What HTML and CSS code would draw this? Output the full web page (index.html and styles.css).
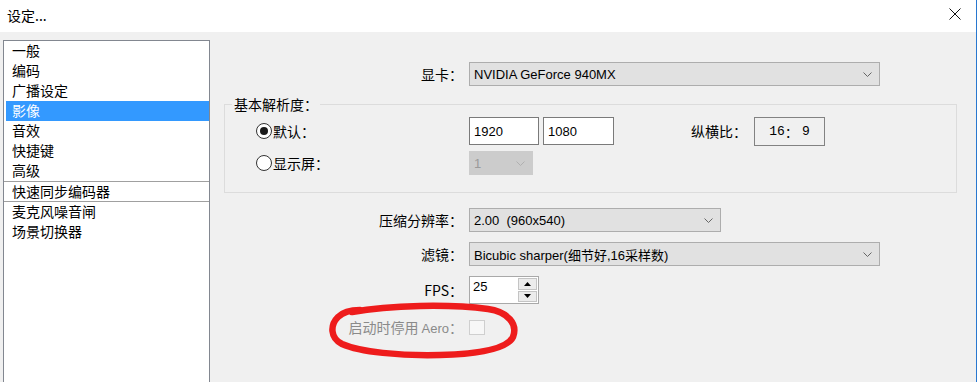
FILE: index.html
```html
<!DOCTYPE html>
<html lang="zh-CN">
<head>
    <meta charset="UTF-8">
    <title>设定...</title>
    <link rel="stylesheet" href="styles.css">
</head>
<body>
    <div class="window">
        <div class="titlebar">
            <span class="title">设定...</span>
            <span class="close">
                <svg width="12" height="12" viewBox="0 0 12 12"><path d="M0.5 0.5 L11.5 11.5 M11.5 0.5 L0.5 11.5" stroke="#111" stroke-width="1"/></svg>
            </span>
        </div>
        <div class="main">
            <ul class="nav">
                <li>一般</li>
                <li>编码</li>
                <li>广播设定</li>
                <li class="active">影像</li>
                <li>音效</li>
                <li>快捷键</li>
                <li>高级</li>
                <li class="split">快速同步编码器</li>
                <li>麦克风噪音闸</li>
                <li>场景切换器</li>
            </ul>
            <div class="panel">
                <div class="row row-gpu">
                    <span class="lbl">显卡：</span>
                    <div class="select select-wide">
                        <span>NVIDIA GeForce 940MX</span>
                        <svg class="chev" width="9" height="5" viewBox="0 0 9 5"><path d="M0.5 0.5 L4.5 4.5 L8.5 0.5" fill="none" stroke="#666"/></svg>
                    </div>
                </div>

                <fieldset class="group">
                    <legend>基本解析度：</legend>
                    <div class="grow">
                        <span class="radio checked"></span>
                        <span class="rlbl">默认：</span>
                        <span class="field field-w">1920</span>
                        <span class="field field-h">1080</span>
                        <span class="ratio-lbl">纵横比：</span>
                        <span class="ratio">16<span class="colon">：</span>9</span>
                    </div>
                    <div class="grow grow-2">
                        <span class="radio"></span>
                        <span class="rlbl">显示屏：</span>
                        <div class="select select-small disabled">
                            <span>1</span>
                            <svg class="chev" width="9" height="5" viewBox="0 0 9 5"><path d="M0.5 0.5 L4.5 4.5 L8.5 0.5" fill="none" stroke="#b0b0b0"/></svg>
                        </div>
                    </div>
                </fieldset>

                <div class="row row-scale">
                    <span class="lbl">压缩分辨率：</span>
                    <div class="select select-mid">
                        <span>2.00&nbsp; (960x540)</span>
                        <svg class="chev" width="9" height="5" viewBox="0 0 9 5"><path d="M0.5 0.5 L4.5 4.5 L8.5 0.5" fill="none" stroke="#666"/></svg>
                    </div>
                </div>
                <div class="row row-filter">
                    <span class="lbl">滤镜：</span>
                    <div class="select select-wide">
                        <span>Bicubic sharper(细节好,16采样数)</span>
                        <svg class="chev" width="9" height="5" viewBox="0 0 9 5"><path d="M0.5 0.5 L4.5 4.5 L8.5 0.5" fill="none" stroke="#666"/></svg>
                    </div>
                </div>
                <div class="row row-fps">
                    <span class="lbl">FPS：</span>
                    <div class="spin">
                        <span class="spin-value">25</span>
                        <span class="spin-btns">
                            <span class="spin-btn"><svg width="7" height="4" viewBox="0 0 7 4"><path d="M3.5 0 L7 4 L0 4 Z" fill="#000"/></svg></span>
                            <span class="spin-btn"><svg width="7" height="4" viewBox="0 0 7 4"><path d="M0 0 L7 0 L3.5 4 Z" fill="#000"/></svg></span>
                        </span>
                    </div>
                </div>
                <div class="row row-aero">
                    <span class="lbl muted">启动时停用 <span class="latin">Aero</span>：</span>
                    <span class="check"></span>
                </div>
            </div>
        </div>
        <!-- red hand-drawn mark over the aero option -->
        <svg class="mark" width="978" height="382" viewBox="0 0 978 382">
            <path d="M352 312 C390 305, 450 304, 488 309 C508 312, 518 324, 513 337 C507 349, 480 354, 440 355 C400 356, 360 352, 342 344 C330 338, 330 325, 338 317 C343 312, 350 310, 360 310" fill="none" stroke="#ee1c1c" stroke-width="6.5" stroke-linecap="round"/>
        </svg>
    </div>
</body>
</html>
```

FILE: styles.css
```css
* {
    margin: 0;
    padding: 0;
    box-sizing: border-box;
}

body {
    background-color: #ffffff;
    font-family: "Noto Sans CJK SC", "Liberation Sans", sans-serif;
    font-size: 14px;
    color: #000;
    overflow: hidden;
}

.window {
    position: relative;
    width: 977px;
    height: 382px;
    border-right: 1px solid #2878d0;
    overflow: hidden;
}

.titlebar {
    height: 32px;
    background-color: #ffffff;
    display: flex;
    align-items: center;
    justify-content: space-between;
    padding: 0 15px 2px 7px;
}

.title {
    font-size: 14px;
    line-height: 16px;
}

.close {
    display: flex;
    margin-top: -3px;
}

.main {
    display: flex;
    height: 350px;
    background-color: #f0f0f0;
    padding: 8px 0 0 3px;
}

/* left list */
.nav {
    list-style: none;
    width: 207px;
    height: 360px;
    flex-shrink: 0;
    background-color: #ffffff;
    border: 1px solid #828790;
    padding: 0 0 0 2px;
}

.nav li {
    height: 20px;
    line-height: 19px;
    padding-left: 6px;
    white-space: nowrap;
}

.nav li.active {
    background-color: #3399ff;
    color: #ffffff;
}

.nav li.split {
    height: 21px;
    line-height: 18px;
    margin-left: -2px;
    padding-left: 8px;
    border-top: 1px solid #a0a0a0;
    border-bottom: 1px solid #a0a0a0;
}

/* right side */
.panel {
    width: 733px;
    margin-left: 14px;
    padding-top: 22px;
}

.row {
    display: flex;
    align-items: center;
}

.lbl {
    width: 245px;
    text-align: right;
    padding-right: 6px;
    white-space: nowrap;
}

.muted {
    color: #8a8a8a;
}

.latin {
    font-family: "Liberation Sans", sans-serif;
    font-size: 13px;
}

.select {
    height: 24px;
    display: flex;
    align-items: center;
    justify-content: space-between;
    background-color: #e1e1e1;
    border: 1px solid #adadad;
    padding: 0 7px 0 4px;
    font-family: "Liberation Sans", "Noto Sans CJK SC", sans-serif;
    font-size: 13px;
    white-space: nowrap;
}

.select-wide {
    width: 411px;
}

.select-mid {
    width: 252px;
}

.select-small {
    width: 64px;
}

.select.disabled {
    background-color: #cccccc;
    border-color: #cccccc;
    color: #9a9a9a;
}

.chev {
    flex-shrink: 0;
}

.group {
    margin-top: 10px;
    border: 1px solid #dcdcdc;
    padding: 5px 0 17px 0;
}

.group legend {
    margin-left: 7px;
    padding: 0 2px;
    line-height: 16px;
}

.grow {
    display: flex;
    align-items: center;
    padding-left: 31px;
    height: 28px;
}

.grow-2 {
    margin-top: 6px;
    height: 24px;
}

.radio {
    width: 16px;
    height: 16px;
    border: 1px solid #333;
    border-radius: 50%;
    background-color: #ffffff;
    display: flex;
    align-items: center;
    justify-content: center;
    flex-shrink: 0;
}

.radio.checked::after {
    content: "";
    width: 8px;
    height: 8px;
    border-radius: 50%;
    background-color: #1a1a1a;
}

.rlbl {
    width: 197px;
    padding-left: 1px;
}

.field {
    height: 28px;
    background-color: #ffffff;
    border: 1px solid #7a7a7a;
    padding: 0 4px;
    display: flex;
    align-items: center;
    font-family: "Liberation Sans", sans-serif;
    font-size: 13px;
}

.field-w {
    width: 70px;
}

.field-h {
    width: 71px;
    margin-left: 4px;
}

.ratio-lbl {
    margin-left: 77px;
    width: 63px;
}

.ratio {
    width: 71px;
    height: 29px;
    border: 1px solid #828282;
    display: flex;
    align-items: center;
    justify-content: center;
    font-family: "Liberation Mono", monospace;
    font-size: 13px;
}

.colon {
    font-family: "Noto Sans CJK SC", sans-serif;
    width: 17px;
}

.row-scale {
    margin-top: 15px;
}

.row-filter {
    margin-top: 10px;
}

.row-fps {
    margin-top: 10px;
}

.spin {
    width: 70px;
    height: 28px;
    display: flex;
    border: 1px solid #a9a9a9;
    background-color: #ffffff;
}

.spin-value {
    flex: 1;
    padding: 2px 0 0 3px;
    font-family: "Liberation Sans", sans-serif;
    font-size: 13px;
    line-height: 16px;
}

.spin-btns {
    width: 20px;
    display: flex;
    flex-direction: column;
    padding: 1px 1px 1px 0;
    gap: 1px;
}

.spin-btn {
    flex: 1;
    display: flex;
    align-items: center;
    justify-content: center;
    background-color: #ececec;
    border: 1px solid #c4c4c4;
}

.row-aero {
    margin-top: 13px;
}

.check {
    width: 16px;
    height: 15px;
    border: 1px solid #cfcfcf;
    background-color: #f7f7f7;
}

.mark {
    position: absolute;
    left: 0;
    top: 0;
    pointer-events: none;
}
```
